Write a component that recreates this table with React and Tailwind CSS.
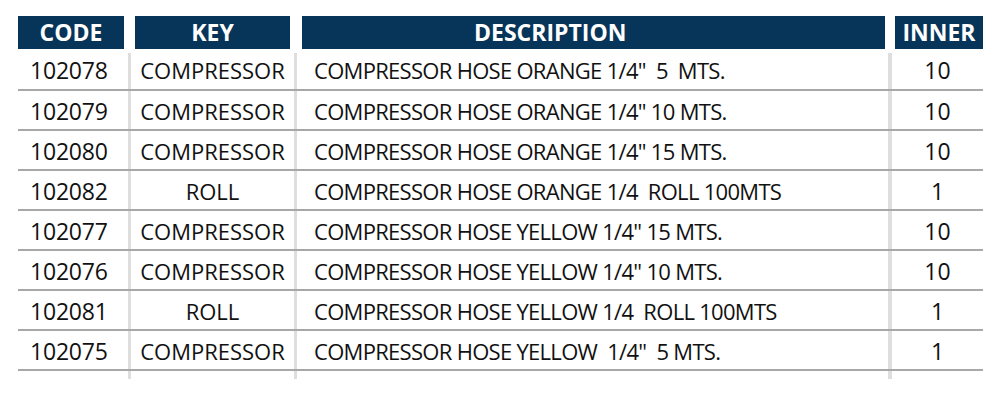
const rows = [
  { code: '102078', key: 'COMPRESSOR', desc: 'COMPRESSOR HOSE ORANGE 1/4"  5  MTS.', inner: '10' },
  { code: '102079', key: 'COMPRESSOR', desc: 'COMPRESSOR HOSE ORANGE 1/4" 10 MTS.', inner: '10' },
  { code: '102080', key: 'COMPRESSOR', desc: 'COMPRESSOR HOSE ORANGE 1/4" 15 MTS.', inner: '10' },
  { code: '102082', key: 'ROLL', desc: 'COMPRESSOR HOSE ORANGE 1/4  ROLL 100MTS', inner: '1' },
  { code: '102077', key: 'COMPRESSOR', desc: 'COMPRESSOR HOSE YELLOW 1/4" 15 MTS.', inner: '10' },
  { code: '102076', key: 'COMPRESSOR', desc: 'COMPRESSOR HOSE YELLOW 1/4" 10 MTS.', inner: '10' },
  { code: '102081', key: 'ROLL', desc: 'COMPRESSOR HOSE YELLOW 1/4  ROLL 100MTS', inner: '1' },
  { code: '102075', key: 'COMPRESSOR', desc: 'COMPRESSOR HOSE YELLOW  1/4"  5 MTS.', inner: '1' },
];

const Sep = ({ first, wide }) => (
  <div className={`${wide ? 'w-[4px]' : 'w-[3px]'} bg-[#dedede] ${first ? 'mt-[4px]' : ''}`} />
);

const App = () => {
  return (
    <div className="w-[1000px] h-[410px] bg-white pl-[18px] pr-[17px] pt-[16px] font-['Open_Sans',sans-serif]">
      {/* Header */}
      <div className="flex h-[33px] text-white font-bold text-[23px] leading-none">
        <div className="w-[106px] bg-[#073559] flex items-center justify-center">CODE</div>
        <div className="w-[155px] ml-[11px] bg-[#073559] flex items-center justify-center">KEY</div>
        <div className="w-[583px] ml-[12px] bg-[#073559] flex items-center pl-[172px]">DESCRIPTION</div>
        <div className="w-[88px] ml-[10px] bg-[#073559] flex items-center justify-center">INNER</div>
      </div>

      {/* Rows */}
      <div className="text-[22px] leading-none text-[#111]">
        {rows.map((r, i) => (
          <div
            key={r.code}
            className={`flex border-b-2 border-[#a8a8a8] ${i === 0 ? 'h-[42px]' : 'h-[40px]'}`}
          >
            <div className="w-[110px] flex items-center pt-[2px] pl-[12px] text-[23px] tracking-[-0.2px]">{r.code}</div>
            <Sep first={i === 0} />
            <div className="w-[163px] flex items-center justify-center pt-[2px] whitespace-pre">{r.key}</div>
            <Sep first={i === 0} />
            <div className="w-[591px] flex items-center pt-[2px] pl-[17px] whitespace-pre tracking-[-0.7px]">{r.desc}</div>
            <Sep first={i === 0} wide />
            <div className="w-[91px] flex items-center justify-center pt-[2px] text-[23px]">{r.inner}</div>
          </div>
        ))}
        <div className="flex h-[8px]">
          <div className="w-[110px]" />
          <Sep />
          <div className="w-[163px]" />
          <Sep />
          <div className="w-[591px]" />
          <Sep wide />
          <div className="w-[91px]" />
        </div>
      </div>
    </div>
  );
};

export default App;
